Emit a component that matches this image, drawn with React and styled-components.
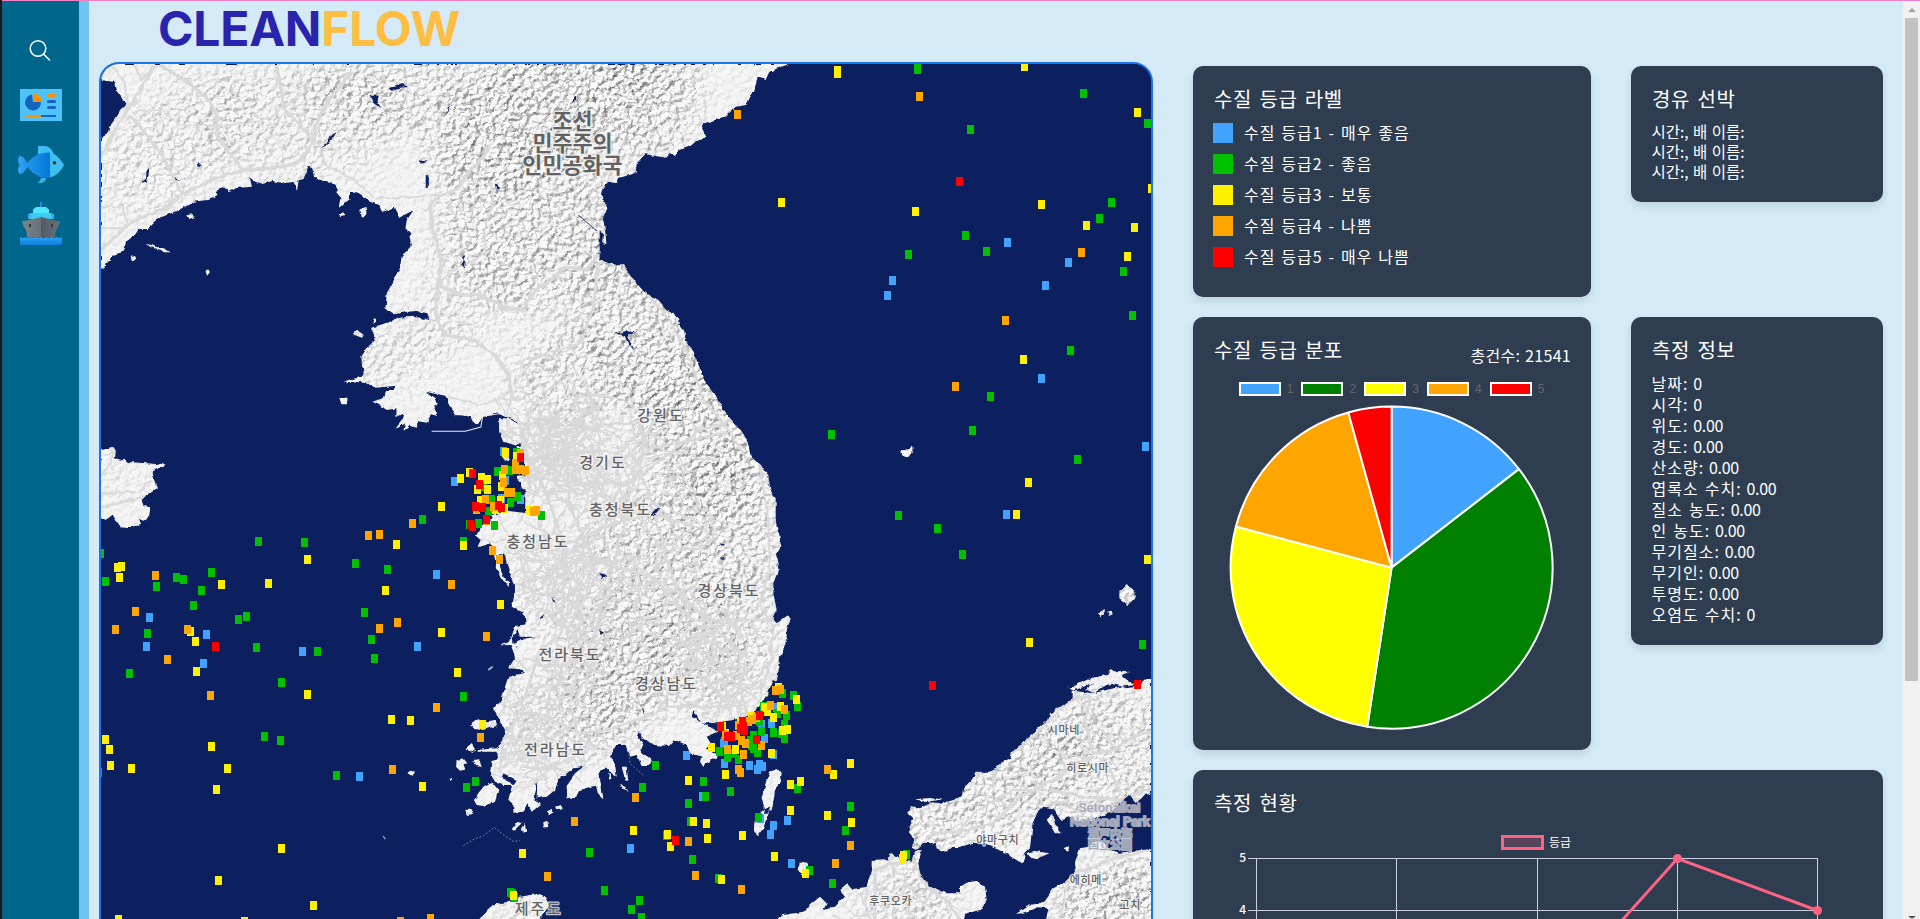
import React from "react";
import styled, { createGlobalStyle } from "styled-components";

const GlobalStyle = createGlobalStyle`
  * { box-sizing: border-box; }
  html, body { margin: 0; height: 919px; overflow: hidden; background: #d4eaf7; }
  body { font-family: "Noto Sans CJK KR", "Noto Sans", sans-serif; }
  #root { height: 919px; }
`;

/* ---------- page frame ---------- */

const Page = styled.div`
  display: flex;
  height: 919px;
  overflow: hidden;
  background: #d4eaf7;
  position: relative;
`;
const TopLine = styled.div`
  position: absolute;
  top: 0;
  left: 2px;
  right: 0;
  height: 1px;
  background: #f17fc4;
`;
const WindowEdge = styled.div`
  width: 2px;
  background: #1b1b1b;
`;
const Sidebar = styled.nav`
  width: 87px;
  background: #00668c;
  border-right: 10px solid #71c4ef;
  display: flex;
  flex-direction: column;
  align-items: center;
  padding-top: 38px;
`;
const NavItem = styled.div`
  width: 48px;
  height: ${(p) => p.$h}px;
  margin-bottom: ${(p) => p.$gap}px;
  svg { display: block; }
`;
const Main = styled.main`
  flex: 1;
  display: flex;
  padding-left: 10px;
`;
const MapColumn = styled.section`
  width: 1054px;
  display: flex;
  flex-direction: column;
`;
const Logo = styled.h1`
  margin: 0;
  height: 62px;
  flex: none;
  padding-left: 59px;
  font: 700 48px/58px Inter, sans-serif;
  letter-spacing: -0.2px;
  color: #2a23ae;
  white-space: nowrap;
`;
const LogoAccent = styled.span`
  color: #ffbe42;
`;
const MapFrame = styled.div`
  width: 1054px;
  height: 904px;
  flex: none;
  border: 2px solid #1a73e8;
  border-radius: 20px;
  overflow: hidden;
  background: #0c2060;
  svg { display: block; }
`;

/* ---------- cards ---------- */

const Panels = styled.section`
  display: grid;
  grid-template-columns: 398px 252px;
  grid-template-rows: 231px 433px 420px;
  column-gap: 40px;
  row-gap: 20px;
  align-items: start;
  padding: 66px 20px 0 40px;
`;
const Card = styled.article`
  grid-column: ${(p) => (p.$wide ? "1 / -1" : "auto")};
  height: ${(p) => p.$h}px;
  padding: 19px 20px 20px;
  border-radius: 10px;
  background: #2e3d50;
  color: #fff;
  box-shadow: 0 4px 8px rgba(0, 0, 0, 0.1);
`;
const CardTitle = styled.h2`
  margin: 0;
  padding-left: 1px;
  font-size: 20px;
  font-weight: 400;
  line-height: 27px;
  letter-spacing: 0.7px;
  word-spacing: 2px;
  white-space: nowrap;
`;
const CardHead = styled.div`
  display: flex;
  justify-content: space-between;
  height: 46px;
`;
const Total = styled.div`
  font-size: 16px;
  line-height: 24px;
  padding-top: 7px;
  letter-spacing: 0.3px;
  word-spacing: 1px;
`;
const GradeList = styled.ul`
  list-style: none;
  margin: 11px 0 0;
  padding: 0;
  display: flex;
  flex-direction: column;
  gap: 11px;
`;
const GradeRow = styled.li`
  display: flex;
  align-items: center;
  gap: 11px;
  height: 20px;
  font-size: 16px;
  line-height: 18px;
  letter-spacing: 1px;
  word-spacing: 1.3px;
  white-space: nowrap;
`;
const GradeText = styled.span`
  padding-bottom: 2px;
`;
const Swatch = styled.i`
  width: 20px;
  height: 20px;
  background: ${(p) => p.$c};
`;
const Lines = styled.div`
  margin-top: ${(p) => p.$top}px;
  padding-left: 0.5px;
  font-size: ${(p) => p.$size}px;
  line-height: ${(p) => p.$lh}px;
  letter-spacing: ${(p) => p.$ls}px;
  word-spacing: ${(p) => p.$ws}px;
  white-space: nowrap;
`;
const Value = styled.span`
  letter-spacing: -0.35px;
  word-spacing: 3px;
`;
const PieLegend = styled.div`
  display: flex;
  justify-content: center;
  gap: 13.8px;
  height: 14px;
  padding-right: 6.5px;
  margin-bottom: 9px;
`;
const PieKey = styled.div`
  display: flex;
  align-items: center;
  gap: 6px;
  width: 49px;
  font: 12px/14px "Liberation Sans", sans-serif;
  color: #666;
`;
const KeyBox = styled.i`
  width: 42px;
  height: 14px;
  flex: none;
  border: 2px solid #fff;
  background: ${(p) => p.$c};
`;
const PieSvg = styled.svg`
  display: block;
  margin: 0 auto;
`;
const LineLegend = styled.div`
  display: flex;
  justify-content: center;
  align-items: center;
  gap: 5px;
  height: 16px;
  margin-top: 18px;
  padding-right: 4px;
  font-size: 12px;
  line-height: 14px;
`;
const LineKey = styled.i`
  width: 43px;
  height: 15px;
  border: 3px solid #ff6384;
  background: rgba(255, 99, 132, 0.2);
`;
const LineSvg = styled.svg`
  display: block;
  overflow: visible;
`;

/* ---------- scrollbar ---------- */

const ScrollTrack = styled.div`
  width: 17px;
  background: #f1f1f1;
  display: flex;
  flex-direction: column;
  align-items: center;
  justify-content: space-between;
`;
const Thumb = styled.div`
  width: 13px;
  height: 663px;
  background: #c1c1c1;
  margin-bottom: auto;
`;
const Arrow = styled.i`
  width: 0;
  height: 0;
  margin: ${(p) => (p.$up ? "8px 0 6px" : "0 0 0")};
  border-left: 4px solid transparent;
  border-right: 4px solid transparent;
  border-bottom: ${(p) => (p.$up ? "4px solid #a3a3a3" : "0")};
  border-top: ${(p) => (p.$up ? "0" : "3px solid #505050")};
`;

/* ---------- map data ---------- */

const COLORS = { b: "#42a3ff", g: "#00c000", y: "#fff000", o: "#ffa500", r: "#ff0000" };

// Survey sheets: every sheet has an origin on the map and its own scale.
const SHEETS = {
  north: [90, 55, 2.904, 3],
  east: [500, 55, 2.3758, 3],
  west: [90, 420, 2.904, 3],
  south: [440, 420, 3, 3],
  japan: [760, 420, 3, 3],
};
const sheetTransform = (name) => {
  const [x, y, sx, sy] = SHEETS[name];
  return `translate(${x} ${y}) scale(${1 / sx} ${1 / sy})`;
};

const LAND = [
  ["north", "0,0 0,70 32,70 45,78 70,80 75,105 90,125 105,150 90,165 75,190 60,210 55,235 32,248 0,255 0,645 32,645 42,640 45,625 60,620 66,600 98,590 105,560 130,540 140,525 165,525 200,490 235,475 270,460 300,440 340,435 355,430 370,420 365,408 385,398 400,398 402,412 420,400 470,395 465,370 480,380 500,387 530,378 560,385 590,381 598,388 600,410 606,376 620,372 635,335 645,340 650,362 668,378 690,378 712,390 720,405 715,412 730,430 725,460 745,440 755,432 755,415 775,412 805,430 812,440 840,450 850,472 885,455 898,488 940,465 920,495 916,520 930,535 928,550 935,570 905,605 900,640 880,680 862,715 858,760 885,778 920,770 950,768 980,775 985,795 960,788 930,785 900,788 870,800 820,818 820,840 830,850 810,870 788,905 790,935 800,945 790,965 738,978 745,985 795,980 830,998 890,992 880,1005 860,1005 850,1030 820,1040 850,1055 860,1065 890,1060 890,1085 910,1075 905,1095 885,1120 895,1118 915,1105 910,1128 930,1112 950,1118 950,1098 978,1103 990,1075 1010,1080 1000,1060 1010,1045 990,1020 975,1010 1032,1022 1040,1045 1060,1080 1090,1082 1105,1085 1112,1100 1128,1108 1140,1085 1190,1075 1230,1095 1262,1105 1266,1140 1262,1170 1240,1178 1262,1200 1270,1240 1270,1260 1240,1262 1240,1275 1270,1290 1290,1350 1290,1400 1480,1400 1480,0"],
  ["north", "1188,1090 1215,1090 1240,1105 1262,1130 1262,1150 1240,1172 1200,1160 1188,1130"],
  ["north", "724,1028 748,1028 746,1048 730,1048"],
  ["north", "762,838 775,824 795,840 790,848"],
  ["north", "283,480 298,478 302,490 288,495"],
  ["north", "118,602 130,600 134,612 122,618"],
  ["north", "165,566 190,575 210,578 232,592 215,592 205,584 175,576"],
  ["north", "334,644 345,644 348,652 340,662"],
  ["north", "785,465 800,455 803,475 790,488"],
  ["north", "722,478 735,472 742,480 728,483"],
  ["north", "822,795 828,788 828,802 820,808"],
  ["east", "685,28 660,40 640,50 632,72 612,65 605,100 585,150 560,155 535,185 485,205 480,220 490,245 465,260 450,275 425,285 418,305 405,295 395,308 345,298 325,325 322,355 280,370 276,385 258,380 245,395 240,420 255,460 245,490 250,530 253,567 245,565 247,535 235,525 220,540 232,560 212,585 225,612 235,608 240,618 272,628 295,628 305,655 345,715 370,730 395,765 425,785 428,815 438,830 442,860 460,890 485,975 515,1030 540,1080 575,1130 590,1170 595,1200 620,1230 640,1280 640,1310 655,1330 655,1400 60,1400 60,0 685,0"],
  ["south", "860,-10 865,0 900,40 920,80 930,105 950,125 985,165 988,200 1005,240 1003,280 1010,320 1023,355 1020,380 1008,400 1015,450 1000,490 1000,520 1010,570 998,590 1010,610 1045,585 1052,600 1040,625 1040,655 1030,690 1020,710 1018,740 1010,785 998,780 985,820 960,860 930,885 880,900 845,905 800,910 780,905 760,870 755,890 800,915 835,935 800,950 812,970 800,985 835,1005 830,1020 812,1018 790,1040 780,1025 788,1010 750,1000 740,975 705,960 690,978 640,975 605,950 600,930 590,945 610,965 600,990 635,1020 630,1035 605,1035 590,1005 570,1010 560,975 530,975 510,1010 525,1030 530,1070 515,1060 500,1040 475,1060 485,1100 490,1138 475,1125 468,1098 450,1100 420,1110 405,1130 382,1135 380,1095 405,1060 430,1040 400,1045 355,1080 345,1110 320,1130 290,1135 292,1080 280,1130 300,1155 275,1175 262,1150 250,1175 220,1178 220,1150 205,1140 215,1100 230,1080 190,1060 185,1075 225,1095 190,1095 165,1085 150,1060 155,1020 175,1015 170,990 190,960 195,930 180,900 160,870 185,840 195,800 205,770 255,758 240,748 205,745 225,715 220,690 240,665 290,650 240,650 230,620 260,615 258,590 245,575 215,560 222,530 222,495 212,470 200,430 195,405 165,400 150,370 112,382 122,360 108,348 125,315 155,300 160,285 200,272 262,280 285,290 300,300 330,300 345,275 300,280 285,255 275,220 245,205 240,175 265,172 250,120 240,60 230,-10"],
  ["south", "185,108 205,100 208,118 195,122"],
  ["south", "160,385 178,400 180,440 195,480 210,490 210,500 190,485 168,445"],
  ["south", "225,618 265,612 262,620 235,625 215,655 218,672 260,655 285,652 225,680 222,700 212,675 180,676 210,665"],
  ["south", "92,915 110,900 150,905 165,900 165,918 130,925 100,925"],
  ["south", "80,985 95,972 105,988 90,998"],
  ["south", "50,1020 70,1015 82,1030 68,1032 75,1050 60,1052 48,1040"],
  ["south", "100,1020 118,1018 125,1042 108,1035"],
  ["south", "102,1140 130,1100 155,1085 175,1110 165,1145 130,1158 110,1155"],
  ["south", "108,990 172,985 180,1000 172,1000 168,995 110,995"],
  ["south", "75,1170 95,1168 102,1182 85,1185"],
  ["south", "215,1228 232,1205 245,1210 232,1222 222,1232"],
  ["south", "310,1210 322,1205 325,1222 312,1222"],
  ["south", "245,1222 255,1212 258,1232 248,1235"],
  ["south", "348,1160 362,1155 368,1165 352,1168"],
  ["south", "320,1175 338,1165 340,1178 325,1185"],
  ["south", "540,1095 555,1100 566,1115 548,1108"],
  ["south", "505,1060 512,1062 514,1080 506,1078"],
  ["south", "545,1040 560,1040 565,1080 555,1078"],
  ["south", "25,1075 35,1070 32,1080"],
  ["south", "1015,1046 1025,1058 1022,1090 1005,1110 998,1160 985,1180 970,1225 953,1247 940,1235 945,1195 975,1165 965,1135 978,1085 990,1055"],
  ["south", "1080,1325 1102,1328 1106,1345 1098,1368 1072,1352"],
  ["south", "115,1500 150,1465 165,1452 200,1447 240,1430 290,1422 315,1432 328,1455 315,1475 300,1500"],
  ["west", "20,95 68,80 75,92 72,118 90,122 97,114 110,126 195,132 205,128 217,134 190,146 182,160 190,195 195,205 168,222 150,240 155,258 175,262 172,290 155,302 140,296 145,315 110,324 90,322 75,300 66,284 45,300 20,290"],
  ["west", "1104,915 1130,898 1150,905 1175,900 1180,918 1140,930"],
  ["west", "925,1060 940,1052 938,1068"],
  ["japan", "1200,768 1155,778 1130,800 1100,805 1060,792 1040,795 1000,818 975,808 1000,788 960,805 935,812 925,803 950,795 990,775 1040,765 1050,748 1062,757 1110,755 1085,765 1110,788 1130,795 1080,800 1000,820 935,812 935,835 910,855 870,880 865,900 830,930 800,955 755,1000 750,1015 720,1030 710,1045 690,1055 650,1055 635,1080 610,1105 605,1125 580,1140 540,1152 510,1150 480,1165 452,1158 445,1180 460,1195 445,1230 462,1260 458,1285 468,1290 490,1268 525,1270 530,1285 555,1298 575,1280 600,1282 640,1268 690,1275 735,1300 790,1332 788,1308 810,1285 818,1210 832,1178 850,1160 880,1165 905,1200 930,1190 960,1205 1000,1200 1060,1170 1090,1140 1110,1122 1130,1150 1150,1125 1200,1115"],
  ["japan", "1200,1285 1120,1292 1080,1298 1050,1290 1030,1265 1000,1262 985,1280 960,1285 945,1330 948,1355 915,1385 880,1405 855,1440 800,1460 768,1482 785,1480 835,1462 865,1465 858,1500 1200,1500"],
  ["japan", "50,1500 70,1485 130,1475 150,1455 180,1430 200,1450 190,1470 225,1460 255,1430 238,1410 262,1390 275,1408 320,1400 325,1380 335,1345 335,1320 370,1318 385,1322 392,1300 430,1320 455,1325 462,1295 485,1290 475,1330 480,1360 510,1400 560,1420 600,1420 600,1400 620,1388 650,1382 675,1400 680,1440 660,1470 620,1480 610,1500"],
  ["japan", "424,95 445,85 457,80 458,98 445,115 426,106"],
  ["japan", "1078,512 1100,496 1126,512 1127,532 1103,556 1078,538"],
  ["japan", "1014,582 1028,570 1036,568 1030,580 1022,592"],
  ["japan", "1045,578 1055,570 1058,585 1050,592"],
  ["japan", "802,1300 820,1292 868,1300 850,1308 830,1318 808,1312"],
  ["japan", "860,1195 880,1185 885,1212 905,1240 885,1240 870,1215"],
  ["japan", "913,1285 928,1278 925,1292"],
  ["japan", "465,1138 510,1134 550,1138 500,1146"],
  ["japan", "770,1320 800,1300 790,1325"],
];

const LAKES = [
  ["north", "170,335 172,350 165,380 145,385 162,372 165,345"],
  ["north", "310,320 325,335 312,335"],
  ["north", "812,122 838,122 835,140 845,158 822,145"],
  ["north", "668,277 690,262 700,240 716,232 705,250 690,268"],
  ["north", "958,316 982,320 960,326"],
  ["north", "975,362 984,365 984,398 975,400"],
  ["north", "868,100 905,88 925,96 900,98 872,106"],
  ["north", "1090,600 1080,606 1090,625 1090,636 1078,634"],
  ["north", "1175,385 1192,400 1180,404"],
  ["north", "245,370 262,374 250,376"],
  ["north", "1032,180 1040,158 1054,146 1042,162"],
  ["north", "1395,145 1412,122 1412,135"],
  ["east", "275,836 300,828 318,832 304,842 310,860 318,885 304,866 296,842"],
  ["south", "478,460 492,462 502,468 490,472 482,484 486,470"],
  ["south", "632,290 645,268 662,264 648,280"],
  ["south", "606,858 616,882 610,880"],
  ["south", "842,370 856,374 848,378"],
  ["south", "840,412 858,412 848,418"],
  ["south", "478,630 492,638 482,645"],
  ["south", "335,528 347,548 340,545"],
  ["south", "295,598 312,582 308,594"],
  ["south", "975,1165 990,1160 985,1178 972,1178"],
];

// Wide roads drawn over the relief.
const ROADS = [
  ["north", 11, "32,585 120,500 220,460 265,420 345,378 440,345 530,340 600,325 650,262 655,215 690,140 760,50"],
  ["north", 10, "200,30 275,75 350,140 368,185 370,245 410,300 445,345"],
  ["north", 10, "540,30 555,100 565,165 610,210 648,260"],
  ["north", 9, "115,180 170,245 210,300 265,415"],
  ["north", 10, "190,30 110,165 70,230 32,305"],
  ["north", 7, "130,30 150,75 180,40"],
  ["north", 6, "60,30 100,80 112,170"],
  ["north", 5, "120,170 210,165 260,210 390,212 510,195 580,145 625,110 610,50"],
  ["north", 5, "665,262 685,330 760,370 830,430 980,425"],
  ["north", 11, "988,440 992,510 1010,570 1020,640 1010,690 1005,780 1030,840 1115,855 1180,905 1215,960 1225,1030 1250,1035"],
  ["north", 10, "1160,270 1140,310 1100,350 1070,400 988,440"],
  ["north", 11, "1010,690 1080,720 1140,722 1200,755 1255,765 1290,710 1350,665 1380,635 1440,645 1480,600"],
  ["north", 6, "32,455 95,455 110,520 32,520"],
  ["north", 6, "1475,620 1460,750 1440,830 1410,870 1290,905 1265,950 1275,1000"],
  ["north", 5, "1040,1025 1130,1050 1190,1030 1230,1035"],
  ["north", 6, "1165,380 1170,450 1145,520 1150,590 1110,620 1040,650"],
  ["east", 6, "235,620 225,740 195,860 140,900 60,910"],
  ["east", 6, "295,640 400,790 440,880 470,980 480,1030 540,1120 590,1220"],
  ["east", 7, "100,1150 180,1120 330,1100 350,1180 440,1160 540,1130"],
  ["south", 9, "280,130 330,250 380,400 370,500 365,640 300,690 265,800 230,900 190,960 180,1060"],
  ["south", 9, "380,120 390,260 460,420 560,450 640,470 700,540 760,600 870,600 1000,600"],
  ["south", 8, "460,410 440,520 380,640 410,760 390,850 420,960 470,980"],
  ["south", 8, "640,0 610,70 600,150 650,300 680,420 710,510 800,600 900,700 900,800 920,880"],
  ["south", 8, "870,605 790,650 720,760 650,880 500,930 420,940 300,880 220,880"],
  ["south", 7, "920,0 960,140 985,300 990,440 960,560 1000,620 990,740 960,820"],
  ["south", 7, "250,170 380,185 560,190 650,130 780,30 890,0"],
  ["south", 7, "220,400 380,370 520,310 640,280 700,300 800,330"],
  ["south", 7, "680,860 800,860 900,860"],
  ["south", 6, "240,1040 330,1045 420,1000 480,970"],
  ["japan", 9, "930,830 990,830 975,900 1000,1000 1060,990 1120,950 1173,935"],
  ["japan", 10, "465,1290 520,1240 600,1235 700,1210 780,1130 880,1080 1000,1010"],
  ["japan", 10, "870,1110 960,1130 1080,1140 1173,1105"],
  ["japan", 8, "590,1240 640,1180 760,1110 860,1110"],
  ["japan", 6, "700,1110 700,1050 830,940 930,840"],
  ["japan", 10, "345,1500 345,1350 400,1330 460,1325 500,1400 560,1440 600,1500"],
  ["japan", 9, "950,1360 1080,1310 1173,1290"],
  ["japan", 7, "900,1500 920,1400 960,1350"],
  ["japan", 7, "1040,1020 1080,1120"],
  ["west", 6, "32,170 60,130 70,90"],
  ["west", 6, "32,220 140,215 180,180"],
  ["west", 7, "32,262 120,240 170,225"],
];

// [sheet, grade, "x,y x,y ..."] — later rows paint over earlier ones.
const SAMPLES = [
  ["east", "y", "802,46 802,54 1246,35 1514,172 1549,400 668,442 987,469 1286,448 1393,511 1508,517 1492,604 1243,913 1255,1282"],
  ["east", "g", "992,39 992,43 1387,115 1538,204 1117,223 1452,442 1424,489 1105,541 1156,589 970,598 1481,649 1502,781 1355,886 1166,1024 787,1138 1122,1126 1372,1212"],
  ["east", "o", "996,124 564,178 1381,592 1201,796 1082,994"],
  ["east", "b", "1205,563 1350,622 932,676 920,721 1296,691 1286,969 1534,1174"],
  ["east", "r", "1091,379"],
  ["japan", "g", "415,286 532,325 607,403 1147,673 112,1104 271,1159 256,1232 148,1351 216,1391 438,1303"],
  ["japan", "b", "739,283 82,1200 40,1216 30,1243 94,1330"],
  ["japan", "y", "769,283 1162,417 808,667 220,1063 271,1031 91,1093 121,1084 91,1170 202,1186 274,1207 43,1309 136,1359 431,1306 427,1316"],
  ["japan", "o", "202,1048 271,1275 226,1330"],
  ["japan", "r", "517,797 1131,793"],
  ["west", "g", "965,298 489,363 623,367 31,400 45,483 193,499 251,472 271,478 353,457 324,511 771,430 864,447 300,555 167,640 115,760 431,598 455,588 484,682 660,695 556,786 798,577 817,658 825,715 507,948 553,961 25,1058 716,1066 1084,363 1084,829 1093,1102 1119,1084 1450,1297 1494,1411 1572,1467 1228,1420 1232,1432 1221,1418"],
  ["west", "y", "1020,259 890,373 631,418 80,442 91,439 85,472 382,493 518,490 858,511 292,633 307,664 309,754 631,823 1192,553 1020,637 1067,757 875,898 930,901 45,958 56,987 59,1035 120,1045 353,979 399,1045 367,1108 965,1099 556,1284 373,1381 650,1455 83,1497 448,1503 1256,1300 1084,376 1140,913 1230,1426"],
  ["west", "o", "936,311 840,342 809,346 191,466 1050,492 132,573 74,628 284,628 225,718 349,826 840,624 893,607 1151,649 1006,862 1134,953 878,1047 1407,1204 1328,1369 988,1495 903,1503 1170,391 1189,418"],
  ["west", "b", "1058,184 1006,463 173,592 164,679 338,643 329,730 617,693 951,679 782,1069"],
  ["west", "r", "364,679"],
  // Asan bay
  ["south", "b", "190,95 242,238 185,235 195,180"],
  ["south", "g", "172,154 207,150 130,200 155,238 145,275 232,230 212,246 304,286 88,313 115,311 163,316 120,240 230,98"],
  ["south", "y", "197,98 61,175 88,157 124,172 142,178 111,208 142,208 183,200 188,165 122,240 182,240 165,268 193,266 268,272 240,100 228,110"],
  ["south", "o", "193,148 190,188 203,217 214,217 241,100 227,130 226,148 241,148 256,151 135,238 110,268 160,260 280,274 290,272 139,302"],
  ["south", "r", "242,112 97,160 118,193 106,258 127,262 175,256 185,262 139,298 92,314 97,319"],
  // Busan and the strait
  ["south", "b", "739,1006 786,1128 571,1285 853,965 853,1030 1000,1004 927,1036 958,1033 967,1039 951,1048 965,912 973,955 995,909 1008,862 962,1195 850,970"],
  ["south", "g", "1027,820 1061,825 1072,859 1012,880 1039,886 1033,912 1000,936 1024,940 1033,955 838,993 958,905 965,935 940,945 930,960 940,985 951,997 862,1012 880,1000 895,1018 646,1035 607,1102 790,1084 796,1129 871,1115 745,1150 750,1203 679,1246 757,1318 835,1375 598,1441 574,1467 604,1491 970,860 955,1192 935,975"],
  ["south", "y", "1015,802 1069,838 974,862 983,874 1020,859 1000,892 1028,930 1042,928 814,981 994,1000 848,918 855,1064 745,1081 760,1204 799,1211 802,1255 580,1231 682,1243 691,1279 907,1246 844,1377 855,940 900,905 935,890 886,988"],
  ["south", "o", "1007,812 1020,808 991,856 1033,868 856,943 895,915 890,945 936,898 950,892 925,905 905,960 915,970 862,988 910,1003 965,977 895,1047 900,1057 586,1131 745,1263 766,1365 904,1408"],
  ["south", "r", "841,919 958,885 907,905 910,918 902,925 912,931 862,950 873,948 949,959 706,1261"],
];

const MARKERS = SAMPLES.flatMap(([sheet, grade, pts]) => {
  const [ox, oy, sx, sy] = SHEETS[sheet];
  return pts.split(" ").map((p) => {
    const [x, y] = p.split(",").map(Number);
    return { x: Math.round(ox + x / sx - 3.5), y: Math.round(oy + y / sy - 4.5), grade };
  });
});

const LABELS = [
  [660, 420.5, 15, "강원도", 2],
  [602, 468, 15, "경기도", 2],
  [619.5, 515, 15, "충청북도", 2],
  [537, 546.5, 15, "충청남도", 2],
  [728, 596, 15, "경상북도", 2],
  [569, 660, 15, "전라북도", 2],
  [665.5, 689, 15, "경상남도", 2],
  [554.5, 755, 15, "전라남도", 2],
  [537.5, 914, 15, "제주도", 2],
  [1063.5, 733.5, 11, "시마네", 0.6],
  [1087.5, 771.5, 11, "히로시마", 0.6],
  [997.5, 844, 11, "야마구치", 0.6],
  [1085.5, 884, 11, "에히메", 0.6],
  [890.5, 904.5, 11, "후쿠오카", 0.6],
  [1130, 908.5, 11, "고치", 0.6],
];
const PARK = [
  [1109.5, 812, 13.2, "Setonaikai"],
  [1110, 826, 13.2, "National Park"],
  [1110, 838, 11, "瀬戸内海"],
  [1110, 849, 11, "国立公園"],
];

// Relief patches: centre, radii, rotation, strength.
const RELIEF = [
  [540, 110, 120, 60, -30, 0.95], [420, 95, 120, 40, 0, 0.65], [180, 140, 90, 50, -40, 0.45],
  [530, 220, 90, 90, 0, 0.8], [640, 90, 60, 70, 0, 0.9], [640, 330, 60, 100, -25, 0.85],
  [400, 350, 70, 30, -20, 0.4], [570, 380, 60, 50, 0, 0.6], [700, 440, 55, 90, -20, 0.95],
  [640, 540, 60, 50, 0, 0.7], [720, 520, 60, 80, 0, 0.65], [620, 660, 55, 90, 20, 0.9],
  [700, 650, 50, 60, 0, 0.7], [550, 600, 40, 40, 0, 0.35], [740, 620, 40, 70, 0, 0.5],
  [560, 720, 70, 40, 0, 0.45], [1000, 790, 120, 45, -35, 0.7], [1110, 760, 80, 70, 0, 0.6],
  [1110, 900, 60, 35, -20, 1], [910, 900, 50, 30, 0, 0.6], [520, 912, 20, 12, 0, 0.9],
  [110, 470, 40, 30, 0, 0.15], [300, 120, 100, 60, 0, 0.4], [470, 290, 50, 50, 0, 0.3],
  [1128, 595, 20, 20, 0, 0.9], [907, 453, 12, 12, 0, 1],
];

const makeStreets = () => {
  let seed = 7;
  const rnd = () => (seed = (seed * 16807) % 2147483647) / 2147483647;
  const hubs = [
    [545, 455, 42, 120], [600, 470, 60, 60], [560, 560, 60, 80], [590, 620, 60, 45],
    [700, 640, 70, 65], [560, 700, 60, 60], [740, 700, 50, 45], [650, 580, 90, 60],
    [540, 760, 50, 35], [660, 480, 80, 35], [1050, 780, 90, 20], [900, 900, 60, 18], [570, 400, 50, 20],
  ];
  return hubs.flatMap(([cx, cy, r, n]) =>
    Array.from({ length: n }, () => {
      let x = cx + (rnd() + rnd() - 1) * r;
      let y = cy + (rnd() + rnd() - 1) * r;
      let a = rnd() * 6.283;
      let d = `M${x.toFixed(1)} ${y.toFixed(1)}`;
      for (let i = 0; i < 8; i += 1) {
        a += (rnd() - 0.5) * 1.1;
        x += Math.cos(a) * 5;
        y += Math.sin(a) * 5;
        d += `L${x.toFixed(1)} ${y.toFixed(1)}`;
      }
      return d;
    })
  ).join("");
};
const STREETS = makeStreets();

function SeaMap() {
  return (
    <svg width="1050" height="900" viewBox="101 64 1050 900">
      <defs>
        <clipPath id="land">
          {LAND.map(([s, pts], i) => (
            <polygon key={i} points={pts} transform={sheetTransform(s)} />
          ))}
        </clipPath>
        <filter id="relief" x="0" y="0" width="100%" height="100%" colorInterpolationFilters="sRGB">
          <feTurbulence type="fractalNoise" baseFrequency="0.18 0.2" numOctaves="3" seed="4" />
          <feColorMatrix values="0 0 0 0 0  0 0 0 0 0  0 0 0 0 0  1 0 0 0 0" />
          <feDiffuseLighting surfaceScale="4.6" diffuseConstant="1.13" lightingColor="#fafafa">
            <feDistantLight azimuth="225" elevation="60" />
          </feDiffuseLighting>
        </filter>
        <filter id="coast" x="0" y="0" width="100%" height="100%">
          <feTurbulence type="fractalNoise" baseFrequency="0.16" numOctaves="2" seed="9" />
          <feDisplacementMap in="SourceGraphic" scale="4" xChannelSelector="R" yChannelSelector="G" />
        </filter>
        <filter id="soft" x="-50%" y="-50%" width="200%" height="200%">
          <feGaussianBlur stdDeviation="14" />
        </filter>
        <mask id="hills" maskUnits="userSpaceOnUse" x="101" y="64" width="1050" height="900">
          <rect x="101" y="64" width="1050" height="900" fill="#141414" />
          <g filter="url(#soft)" opacity="0.72">
            {RELIEF.map(([x, y, rx, ry, rot, o], i) => (
              <ellipse key={i} cx={x} cy={y} rx={rx} ry={ry} fill="#fff" opacity={o * 0.7} transform={`rotate(${rot} ${x} ${y})`} />
            ))}
          </g>
        </mask>
      </defs>
      <rect x="101" y="64" width="1050" height="900" fill="#0c2060" />
      <g filter="url(#coast)">
        <g clipPath="url(#land)">
          <rect x="101" y="64" width="1050" height="900" fill="#f5f5f5" />
          <g mask="url(#hills)">
            <rect x="101" y="64" width="1050" height="900" filter="url(#relief)" />
          </g>
          <path d={STREETS} fill="none" stroke="#d8d8d8" strokeWidth="1.5" />
          {ROADS.map(([s, w, pts], i) => (
            <polyline key={i} points={pts} transform={sheetTransform(s)} fill="none" stroke="#d9d9d9" strokeWidth={w} strokeLinejoin="round" />
          ))}
        </g>
        {LAKES.map(([s, pts], i) => (
          <polygon key={i} points={pts} transform={sheetTransform(s)} fill="#0c2060" />
        ))}
      </g>
      <g fill="none" stroke="#e8eaf0">
        <polyline transform={sheetTransform("north")} points="992,1129 1090,1129 1135,1116 1140,1084 1200,1074" strokeWidth="3" />
        <polyline transform={sheetTransform("south")} points="70,1277 105,1256 130,1248 163,1222 195,1248 220,1264 240,1262" strokeWidth="2" strokeDasharray="5 6" opacity=".8" />
        <polyline transform={sheetTransform("south")} points="565,990 570,1030 612,1068" strokeWidth="2" strokeDasharray="5 6" opacity=".7" />
        <polyline transform={sheetTransform("south")} points="145,750 158,740" strokeWidth="5" opacity=".8" />
        <polyline transform={sheetTransform("west")} points="851,1248 858,1258" strokeWidth="3" opacity=".8" />
      </g>
      <polyline transform={sheetTransform("north")} points="1418,480 1472,528" fill="none" stroke="#3c4a7c" strokeWidth="3" />
      <g textAnchor="middle" fill="#626262" stroke="#f5f5f5" strokeWidth="2.6" strokeOpacity=".75" strokeLinejoin="round" paintOrder="stroke" fontFamily='"Noto Sans CJK KR", sans-serif'>
        <text fontSize="21.8" fontWeight="700">
          <tspan x="572.5" y="129">조선</tspan>
          <tspan x="572.5" y="151">민주주의</tspan>
          <tspan x="572.5" y="173">인민공화국</tspan>
        </text>
        {LABELS.map(([x, y, size, text, ls]) => (
          <text key={text} x={x + ls / 2} y={y} fontSize={size} fontWeight="500" letterSpacing={ls}>{text}</text>
        ))}
      </g>
      <g textAnchor="middle" fill="#a4a8b8" stroke="#dfe0e6" strokeWidth="2" strokeOpacity=".7" strokeLinejoin="round" paintOrder="stroke" fontWeight="500" fontFamily='Roboto, "Noto Sans CJK JP", sans-serif'>
        {PARK.map(([x, y, size, text]) => (
          <text key={text} x={x} y={y} fontSize={size}>{text}</text>
        ))}
      </g>
      <g shapeRendering="crispEdges">
        {MARKERS.map((m, i) => (
          <rect key={i} x={m.x} y={m.y} width="7" height="9" fill={COLORS[m.grade]} />
        ))}
      </g>
    </svg>
  );
}

/* ---------- icons ---------- */

const SearchIcon = () => (
  <svg width="48" height="24" viewBox="0 0 48 24" fill="none" stroke="#fff" strokeWidth="1.5">
    <circle cx="21" cy="10.500" r="7.800" />
    <path d="M26.700 16.200 32.500 22" strokeLinecap="round" />
  </svg>
);
const ReportIcon = () => (
  <svg width="48" height="32" viewBox="0 0 48 32">
    <path fill="#4fc3f7" d="M3 0h42v32H3z" />
    <path fill="#1565c0" d="M15 5.500A8 8 0 1 0 24 13h-8z" />
    <path fill="#ff8f00" d="M16 4.500V13h8.800A8.800 8.800 0 0 0 16 4.500z" />
    <path stroke="#ff8f00" strokeWidth="3" strokeLinecap="round" d="M31.500 6.500h6" />
    <path stroke="#1565c0" strokeWidth="3" strokeLinecap="round" d="M31.500 12.500h6M31.500 18.500h6" />
    <path fill="#ff8f00" d="M9 26h15v2H9z" />
    <path fill="#1565c0" d="M24 26h15v2H24z" />
  </svg>
);
const FishIcon = () => (
  <svg width="48" height="38" viewBox="0 0 48 38">
    <defs>
      <linearGradient id="fishBody" x1="0" x2="1"><stop offset="0" stopColor="#2597ee" /><stop offset="1" stopColor="#0377d6" /></linearGradient>
      <linearGradient id="fishTail" x1="0" x2="1"><stop offset="0" stopColor="#35a8f5" /><stop offset="1" stopColor="#1b8fe8" /></linearGradient>
    </defs>
    <path fill="#3ebef0" d="M21 0h6c5 0 8 3 9.500 8L21 11z" />
    <path fill="#35b4ea" d="M24 32h5c0 3-3 5-6 5h-2.500c2-1 3-3 3.500-5z" />
    <path fill="url(#fishTail)" d="M12 19C9 15 7 10 2.500 10-1 15 3 19 3 19s-4 4-.5 9C7 28 9 23 12 19z" />
    <path fill="url(#fishBody)" d="M9 19C15 10 23 6 33 6.500v25C23 33 15 28 9 19z" />
    <path fill="#3ebef0" d="M33 6.500C40 8 44 14 47 19c-3 6-8 11-14 12.500z" />
    <circle cx="37.500" cy="16.700" r="1.800" fill="#3a3a3a" />
  </svg>
);
const ShipIcon = () => (
  <svg width="48" height="44" viewBox="0 0 48 44">
    <defs>
      <linearGradient id="sea" x1="0" x2="0" y1="0" y2="1"><stop offset="0" stopColor="#2ba2f7" /><stop offset="1" stopColor="#0b7fdc" /></linearGradient>
      <linearGradient id="hullL" x1="0" x2="1"><stop offset="0" stopColor="#7c858c" /><stop offset="1" stopColor="#667078" /></linearGradient>
      <linearGradient id="hullR" x1="0" x2="1"><stop offset="0" stopColor="#505b64" /><stop offset="1" stopColor="#66727b" /></linearGradient>
    </defs>
    <path stroke="#1b8fe8" strokeWidth="2" d="M24 0v5" />
    <path fill="#50e6ff" d="M16 11V7.500L19 5h10l3 2.500V11z" />
    <path fill="#32b0e7" d="M11 17v-5l3-1h20l3 1v5z" />
    <path fill="#3ccbf4" d="M14 11h20v6H14z" />
    <path fill="url(#hullL)" d="M24 15 5 19.500l1.500 5c2.500 3 3.500 6 3.500 11h14z" />
    <path fill="url(#hullR)" d="m24 15 19 4.500-1.500 5c-2.500 3-3.500 6-3.500 11H24z" />
    <path fill="#353b40" d="M12 22h2v3h-2zM34 22h2v3h-2z" />
    <path fill="url(#sea)" d="M3 35q2.600 2 5.200 0 2.600 2 5.200 0 2.600 2 5.300 0 2.600 2 5.300 0 2.600 2 5.300 0 2.600 2 5.200 0 2.600 2 5.200 0 2.600 2 5.300 0v6.500q0 1.500-1.500 1.500h-39Q3 43 3 41.500z" />
  </svg>
);

/* ---------- charts ---------- */

const SLICES = [
  [0, 52.3, "#42a3ff"],
  [52.3, 188.7, "#008000"],
  [188.7, 284.8, "#ffff00"],
  [284.8, 344.4, "#ffa500"],
  [344.4, 360, "#ff0000"],
];
const onCircle = (deg, r) => {
  const a = ((deg - 90) * Math.PI) / 180;
  return `${(162.6 + r * Math.cos(a)).toFixed(2)} ${(162.6 + r * Math.sin(a)).toFixed(2)}`;
};
const Pie = () => (
  <PieSvg width="326" height="326" viewBox="0 0 326 326">
    {SLICES.map(([a, b, c]) => (
      <path key={c} d={`M162.6 162.6L${onCircle(a, 161)}A161 161 0 0 1 ${onCircle(b, 161)}Z`} fill={c} stroke="#fff" strokeWidth="2" strokeLinejoin="bevel" />
    ))}
  </PieSvg>
);

const LineChart = () => (
  <LineSvg width="650" height="240" viewBox="0 0 650 240">
    <g stroke="#ccd0e4" strokeWidth="1" fill="none">
      <path d="M35 8.500H604.500M35 60.500H604.500M35 112.500H604.500M35 164.500H604.500" />
      <path d="M43.500 8V220M183.500 8V220M324.500 8V220M464.500 8V220M604.500 8V220" />
    </g>
    <g fill="#fff" fontSize="12" fontWeight="500" fontFamily='"Noto Sans CJK KR", sans-serif' textAnchor="end">
      <text x="33" y="12">5</text>
      <text x="33" y="64">4</text>
    </g>
    <polyline points="324.500,164.500 464.500,8.500 604.500,60.500" fill="none" stroke="#ff6384" strokeWidth="3" />
    <g fill="#ff6384">
      <circle cx="464.500" cy="8.500" r="4.500" />
      <circle cx="604.500" cy="60.500" r="4.500" />
    </g>
  </LineSvg>
);

/* ---------- content ---------- */

const GRADES = [
  ["#42a3ff", "수질 등급1 - 매우 좋음"],
  ["#00c000", "수질 등급2 - 좋음"],
  ["#fff000", "수질 등급3 - 보통"],
  ["#ffa500", "수질 등급4 - 나쁨"],
  ["#ff0000", "수질 등급5 - 매우 나쁨"],
];
const INFO = [
  ["날짜", "0"], ["시각", "0"], ["위도", "0.00"], ["경도", "0.00"], ["산소량", "0.00"],
  ["엽록소 수치", "0.00"], ["질소 농도", "0.00"], ["인 농도", "0.00"], ["무기질소", "0.00"],
  ["무기인", "0.00"], ["투명도", "0.00"], ["오염도 수치", "0"],
];

export default function App() {
  return (
    <Page>
      <GlobalStyle />
      <WindowEdge />
      <Sidebar>
        <NavItem $h={24} $gap={27}><SearchIcon /></NavItem>
        <NavItem $h={32} $gap={25}><ReportIcon /></NavItem>
        <NavItem $h={38} $gap={18}><FishIcon /></NavItem>
        <NavItem $h={44} $gap={0}><ShipIcon /></NavItem>
      </Sidebar>
      <Main>
        <MapColumn>
          <Logo>CLEAN<LogoAccent>FLOW</LogoAccent></Logo>
          <MapFrame><SeaMap /></MapFrame>
        </MapColumn>
        <Panels>
          <Card $h={231}>
            <CardTitle>수질 등급 라벨</CardTitle>
            <GradeList>
              {GRADES.map(([c, text]) => (
                <GradeRow key={text}><Swatch $c={c} /><GradeText>{text}</GradeText></GradeRow>
              ))}
            </GradeList>
          </Card>
          <Card $h={136}>
            <CardTitle>경유 선박</CardTitle>
            <Lines $top={9} $size={15.5} $lh={20} $ls={0} $ws={1}>
              {[0, 1, 2].map((i) => <div key={i}>시간:, 배 이름:</div>)}
            </Lines>
          </Card>
          <Card $h={433}>
            <CardHead>
              <CardTitle>수질 등급 분포</CardTitle>
              <Total>총건수: 21541</Total>
            </CardHead>
            <PieLegend>
              {SLICES.map(([, , c], i) => (
                <PieKey key={c}><KeyBox $c={c} />{i + 1}</PieKey>
              ))}
            </PieLegend>
            <Pie />
          </Card>
          <Card $h={328}>
            <CardTitle>측정 정보</CardTitle>
            <Lines $top={10} $size={16} $lh={21} $ls={1} $ws={1.5}>
              {INFO.map(([k, v]) => <div key={k}>{k}<Value>: {v}</Value></div>)}
            </Lines>
          </Card>
          <Card $h={420} $wide>
            <CardTitle>측정 현황</CardTitle>
            <LineLegend><LineKey />등급</LineLegend>
            <LineChart />
          </Card>
        </Panels>
      </Main>
      <ScrollTrack>
        <Arrow $up />
        <Thumb />
        <Arrow />
      </ScrollTrack>
      <TopLine />
    </Page>
  );
}
